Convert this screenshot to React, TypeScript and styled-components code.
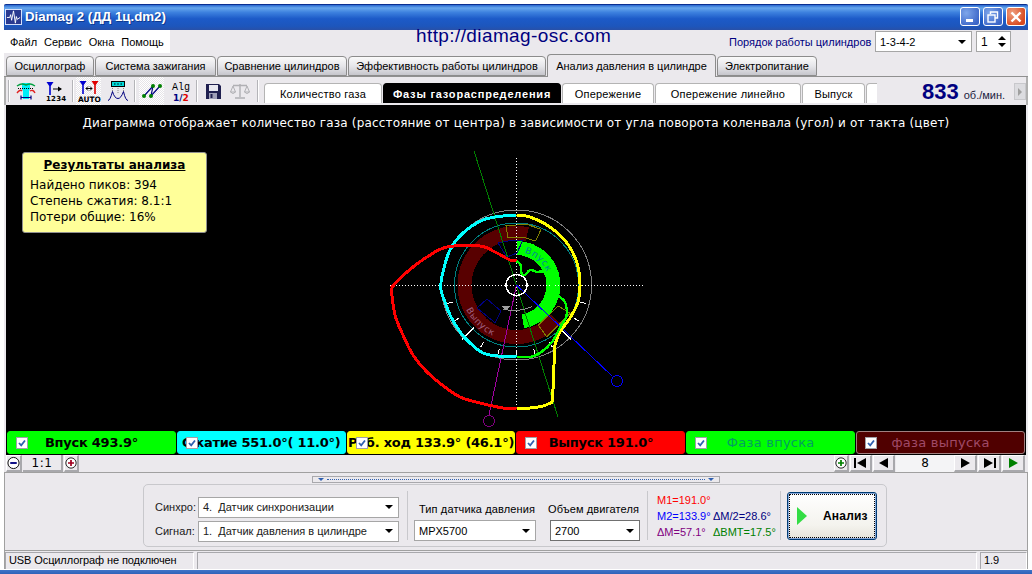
import React from "react";
import styled, { createGlobalStyle } from "styled-components";

const Global = createGlobalStyle`
  html, body { margin: 0; padding: 0; background: #fff; }
  body { font-family: "Liberation Sans", Arial, sans-serif; font-size: 11px; color: #000; }
`;

const Page = styled.div`
  width: 1032px;
  height: 574px;
  padding: 4px 4px 0;
  box-sizing: border-box;
  overflow: hidden;
`;

const Win = styled.div`
  height: 570px;
  display: flex;
  flex-direction: column;
  background: #ebe9ed;
`;

/* ---------- title bar ---------- */
const TitleBar = styled.div`
  height: 26px;
  flex: none;
  box-sizing: border-box;
  display: flex;
  align-items: center;
  gap: 3px;
  padding: 0 2px 2px 1px;
  border-top: 1px solid #0a2f90;
  border-radius: 2px 2px 0 0;
  background: linear-gradient(180deg, #2a68d0 0%, #66a6ec 12%, #3c80de 30%, #1c5ac8 55%, #1d56bc 85%, #2850a8 100%);
`;
const AppIcon = styled.svg`
  width: 17px;
  height: 16px;
  flex: none;
`;
const Caption = styled.div`
  flex: 1;
  color: #fff;
  font: bold 13.3px "Liberation Sans", Arial, sans-serif;
  text-shadow: 1px 1px 0 #0f3a90;
`;
const WinBtn = styled.div<{ $close?: boolean }>`
  width: 20px;
  height: 19px;
  box-sizing: border-box;
  border: 1px solid #fff;
  border-radius: 3px;
  display: flex;
  align-items: center;
  justify-content: center;
  background: ${(p) =>
    p.$close
      ? "radial-gradient(circle at 30% 30%, #f0a080, #d84a20 75%)"
      : "radial-gradient(circle at 30% 30%, #7ea6ea, #3c66c8 80%)"};
`;

/* ---------- menu row ---------- */
const MenuRow = styled.div`
  height: 24px;
  flex: none;
  display: flex;
  align-items: stretch;
`;
const Menu = styled.div`
  width: 166px;
  background: #fff;
  display: flex;
  align-items: center;
  gap: 7px;
  padding-left: 6px;
  box-sizing: border-box;
  font-size: 11px;
  height: 23px;
`;
const Url = styled.div`
  margin-left: 246px;
  width: 240px;
  font-size: 19px;
  letter-spacing: 0.4px;
  line-height: 20px;
  margin-top: -4px;
  color: #000080;
  position: relative;
`;
const OrderLabel = styled.div`
  margin-left: 73px;
  width: 146px;
  padding-top: 6px;
  color: #000080;
  font-size: 11px;
`;
const Combo = styled.div<{ $w: number; $h?: number; $dark?: boolean }>`
  width: ${(p) => p.$w}px;
  height: ${(p) => p.$h ?? 21}px;
  flex: none;
  box-sizing: border-box;
  background: #fff;
  border: 1px solid ${(p) => (p.$dark ? "#707070" : "#a6a6a6")};
  display: flex;
  align-items: center;
  justify-content: space-between;
  padding: 0 5px 0 4px;
  font-size: 11px;
  white-space: nowrap;
  overflow: hidden;
`;
const ComboArrow = styled.i`
  flex: none;
  width: 0;
  height: 0;
  border-left: 4px solid transparent;
  border-right: 4px solid transparent;
  border-top: 4px solid #000;
  margin-left: 4px;
`;
const OrderCombo = styled(Combo)`
  margin-top: 1px;
`;
const Spinner = styled(Combo)`
  margin: 1px 0 0 4px;
  padding: 0 4px;
  font-size: 12px;
`;
const SpinArrows = styled.div`
  display: flex;
  flex-direction: column;
  gap: 3px;
  i {
    display: block;
    width: 0;
    height: 0;
    border-left: 4px solid transparent;
    border-right: 4px solid transparent;
  }
  i:first-child { border-bottom: 4px solid #000; }
  i:last-child { border-top: 4px solid #000; }
`;

/* ---------- main tabs ---------- */
const TabStrip = styled.div`
  height: 23px;
  flex: none;
  box-sizing: border-box;
  display: flex;
  align-items: flex-end;
  padding-left: 2px;
  border-bottom: 1px solid #909090;
`;
const Tab = styled.div<{ $w: number; $active?: boolean }>`
  width: ${(p) => p.$w}px;
  height: ${(p) => (p.$active ? 23 : 20)}px;
  margin-right: 1px;
  margin-bottom: ${(p) => (p.$active ? -1 : 0)}px;
  box-sizing: border-box;
  border: 1px solid #8c8c8c;
  border-bottom: ${(p) => (p.$active ? "none" : "1px solid #8c8c8c")};
  border-radius: 4px 4px 0 0;
  display: flex;
  align-items: center;
  justify-content: center;
  white-space: nowrap;
  font-size: 11px;
  background: ${(p) => (p.$active ? "#ebe9ed" : "linear-gradient(180deg, #fafafa, #e6e6ea 50%, #c6c6cc)")};
  position: relative;
  z-index: ${(p) => (p.$active ? 1 : 0)};
`;

/* ---------- toolbar ---------- */
const Toolbar = styled.div`
  height: 28px;
  flex: none;
  display: flex;
  align-items: stretch;
  border-left: 2px solid #b0b0b0;
  border-right: 2px solid #b0b0b0;
  box-sizing: border-box;
`;
const Sep = styled.span<{ $ml?: number; $mr?: number }>`
  width: 1px;
  flex: none;
  align-self: center;
  height: 22px;
  margin: 0 ${(p) => p.$mr ?? 0}px 0 ${(p) => p.$ml ?? 0}px;
  background: #b4b4b8;
  border-right: 1px solid #fff;
`;
const ToolBtn = styled.div<{ $w: number; $pressed?: boolean }>`
  width: ${(p) => p.$w}px;
  flex: none;
  display: flex;
  align-items: center;
  justify-content: center;
  background: ${(p) =>
    p.$pressed ? "repeating-conic-gradient(#ffffff 0 25%, #e6e4e8 0 50%) 0 0 / 2px 2px" : "transparent"};
`;
const Ico = styled.svg`
  display: block;
  overflow: visible;
`;
const SubTabs = styled.div`
  display: flex;
  align-items: flex-end;
  width: 613px;
  margin-left: 5px;
  overflow: hidden;
  padding-bottom: 2px;
  flex: none;
`;
const SubTab = styled.div<{ $w: number; $active?: boolean }>`
  width: ${(p) => p.$w}px;
  height: 20px;
  flex: none;
  margin-right: 1px;
  box-sizing: border-box;
  border: 1px solid ${(p) => (p.$active ? "#000" : "#b4b4b4")};
  border-bottom: none;
  border-radius: 4px 4px 0 0;
  background: ${(p) => (p.$active ? "#000" : "#fff")};
  color: ${(p) => (p.$active ? "#fff" : "#000")};
  font-weight: ${(p) => (p.$active ? 700 : 400)};
  display: flex;
  align-items: center;
  justify-content: center;
  white-space: nowrap;
  font-size: 11px;
  letter-spacing: ${(p) => (p.$active ? 0.8 : 0.2)}px;
`;
const Rpm = styled.div`
  margin-left: 45px;
  display: flex;
  align-items: baseline;
  gap: 5px;
  color: #000080;
  padding-top: 2px;
  font-size: 11px;
  line-height: 24px;
  b {
    font: bold 22px "Liberation Sans", Arial, sans-serif;
  }
  span { color: #202040; }
`;
const ScrollBtn = styled.div`
  margin: 6px 0 5px auto;
  width: 12px;
  display: flex;
  align-items: center;
  justify-content: center;
  background: #dcdce0;
  border: 1px solid #c8c8cc;
  box-sizing: border-box;
  i {
    width: 0;
    height: 0;
    border-top: 4px solid transparent;
    border-bottom: 4px solid transparent;
    border-left: 4px solid #a0a0a0;
  }
`;

/* ---------- scope ---------- */
const Scope = styled.div`
  height: 350px;
  flex: none;
  margin: 0 2px;
  background: #000;
  display: flex;
  flex-direction: column;
`;
const Plot = styled.div`
  flex: 1;
  position: relative;
`;
const PlotCaption = styled.div`
  color: #fff;
  font: 12px "DejaVu Sans", Verdana, sans-serif;
  text-align: center;
  padding-top: 11px;
  line-height: 15px;
  position: relative;
  letter-spacing: 0.17px;
  white-space: nowrap;
`;
const PlotSvg = styled.svg`
  position: absolute;
  inset: 0;
  width: 100%;
  height: 100%;
`;
const Note = styled.div`
  position: absolute;
  left: 16px;
  top: 47px;
  width: 185px;
  height: 81px;
  box-sizing: border-box;
  background: #ffff99;
  border: 1px solid #909090;
  border-radius: 3px;
  padding: 4px 0 0 7px;
  font: 12px/16px "DejaVu Sans", Verdana, sans-serif;
  h4 {
    margin: 0 0 4px;
    padding-right: 7px;
    text-align: center;
    font-size: 12px;
    font-weight: 700;
    text-decoration: underline;
  }
`;
const Chips = styled.div`
  height: 24px;
  flex: none;
  display: flex;
  gap: 1px;
  padding: 0 1px;
`;
const Chip = styled.div<{ $bg: string; $fg: string; $bold?: boolean; $edge?: string }>`
  flex: 1 1 0;
  min-width: 0;
  position: relative;
  box-sizing: border-box;
  height: 23px;
  border-radius: 3px;
  border: 1px solid ${(p) => p.$edge ?? p.$bg};
  background: ${(p) => p.$bg};
  color: ${(p) => p.$fg};
  font: ${(p) => (p.$bold ? 700 : 400)} 13px "DejaVu Sans", Verdana, sans-serif;
  letter-spacing: ${(p) => (p.$bold ? -0.25 : 0.25)}px;
  display: flex;
  align-items: center;
  justify-content: center;
  white-space: nowrap;
  overflow: hidden;
`;
const Check = styled.span`
  position: absolute;
  left: 8px;
  top: 5px;
  width: 12px;
  height: 12px;
  box-sizing: border-box;
  background: #fff;
  border: 1px solid #a0a0a8;
  display: flex;
  align-items: center;
  justify-content: center;
`;

/* ---------- navigation row ---------- */
const NavRow = styled.div`
  height: 17px;
  flex: none;
  margin-left: 2px;
  margin-right: 2px;
  display: flex;
  align-items: stretch;
`;
const NavBtn = styled.div<{ $w: number }>`
  width: ${(p) => p.$w}px;
  flex: none;
  box-sizing: border-box;
  display: flex;
  align-items: center;
  justify-content: center;
  background: #ebe9ed;
  border-right: 2px solid #a8a8ac;
  border-bottom: 2px solid #a8a8ac;
  border-top: 1px solid #fff;
  border-left: 1px solid #fff;
  margin-right: 1px;
`;
const Ratio = styled.div`
  width: 40px;
  flex: none;
  box-sizing: border-box;
  text-align: center;
  font: 12px/17px "DejaVu Sans", Verdana, sans-serif;
  letter-spacing: 0.6px;
  border-bottom: 2px solid #a8a8ac;
  border-right: 2px solid #a8a8ac;
  margin-right: 1px;
`;
const Frame = styled.div`
  width: 58px;
  flex: none;
  text-align: center;
  background: #f4f4f6;
  font: 12px/17px "DejaVu Sans", Verdana, sans-serif;
`;
const NavGap = styled.div`
  flex: 1;
`;

/* ---------- lower panel ---------- */
const Lower = styled.div`
  flex: 1;
  display: flex;
  flex-direction: column;
  align-items: center;
  border-top: 1px solid #a0a0a0;
  border-left: 1px solid #a0a0a0;
  border-right: 1px solid #a0a0a0;
  min-height: 0;
`;
const Collapse = styled.div`
  width: 408px;
  height: 7px;
  margin-top: 3px;
  flex: none;
  box-sizing: border-box;
  border: 1px solid #a8a8ac;
  display: flex;
  align-items: center;
  justify-content: space-between;
  padding: 0 5px;
  i {
    width: 0;
    height: 0;
    border-left: 3px solid transparent;
    border-right: 3px solid transparent;
    border-top: 3px solid #3060b0;
  }
  span { flex: 1; margin: 0 3px; border-top: 1px dotted #3060b0; }
`;
const Panel = styled.div`
  width: 744px;
  height: 63px;
  margin-top: 1px;
  margin-left: -2px;
  flex: none;
  box-sizing: border-box;
  border: 1px solid #c8c8cc;
  border-radius: 5px;
  display: flex;
  align-items: center;
  padding: 0 9px 0 11px;
`;
const SourceCol = styled.div`
  display: grid;
  grid-template-columns: 43px 201px;
  row-gap: 3px;
  align-items: center;
  margin-top: 7px;
  color: #202020;
`;
const VLine = styled.div<{ $ml?: number }>`
  width: 1px;
  align-self: center;
  height: 49px;
  margin-left: ${(p) => p.$ml ?? 0}px;
  background: #c8c8cc;
  flex: none;
`;
const Field = styled.div<{ $ml: number; $inset: number }>`
  margin-left: ${(p) => p.$ml}px;
  flex: none;
  display: flex;
  flex-direction: column;
  gap: 5px;
  span { margin-left: ${(p) => p.$inset}px; letter-spacing: 0.12px; white-space: nowrap; }
  margin-top: 13px;
`;
const Readout = styled.div`
  margin-left: 9px;
  width: 123px;
  flex: none;
  display: grid;
  grid-template-columns: 56px auto;
  grid-auto-rows: 16px;
  align-items: center;
  font-size: 11px;
  white-space: nowrap;
`;
const Val = styled.span<{ $c: string }>`
  color: ${(p) => p.$c};
`;
const RunBtn = styled.div`
  margin-left: 6px;
  width: 90px;
  height: 48px;
  flex: none;
  box-sizing: border-box;
  border: 1px solid #003c74;
  border-radius: 3px;
  background: linear-gradient(180deg, #ffffff, #f4f3ee 70%, #e6e4da);
  box-shadow: inset 0 0 0 1px #88a8d8;
  outline: 1px dotted #000;
  outline-offset: -3px;
  display: flex;
  align-items: center;
  padding-left: 9px;
  gap: 16px;
  font-weight: 700;
  font-size: 12px;
  letter-spacing: 0.2px;
`;
const Play = styled.i`
  width: 0;
  height: 0;
  border-top: 9px solid transparent;
  border-bottom: 9px solid transparent;
  border-left: 10px solid #33dd44;
`;

/* ---------- status bar ---------- */
const Status = styled.div`
  height: 19px;
  flex: none;
  margin-top: 3px;
  width: 100%;
  box-sizing: border-box;
  border-top: 1px solid #a0a0a0;
  display: flex;
  gap: 3px;
  padding-top: 1px;
`;
const Cell = styled.div<{ $w?: number }>`
  ${(p) => (p.$w ? `width: ${p.$w}px; flex: none;` : "flex: 1;")}
  box-sizing: border-box;
  border-right: 1px solid #fff;
  border-left: 1px solid #a8a8ac;
  border-top: 1px solid #a8a8ac;
  line-height: 15px;
  padding-left: 3px;
  font-size: 11px;
  letter-spacing: -0.1px;
  white-space: nowrap;
`;
const BottomFrame = styled.div`
  height: 5px;
  flex: none;
  margin: 0 -4px;
  background: linear-gradient(180deg, #ffffff 0, #ffffff 20%, #3f74c8 20%, #2f62b8 100%);
`;

/* ---------- drawings ---------- */
const C = { x: 516.5, y: 285 };

const polar = (r: number, deg: number) => {
  const a = ((deg - 90) * Math.PI) / 180;
  return [C.x + r * Math.cos(a), C.y + r * Math.sin(a)];
};

const ringSector = (r0: number, r1: number, from: number, to: number) => {
  const [ax, ay] = polar(r1, from);
  const [bx, by] = polar(r1, to);
  const [cx, cy] = polar(r0, to);
  const [dx, dy] = polar(r0, from);
  const large = to - from > 180 ? 1 : 0;
  return `M${ax} ${ay}A${r1} ${r1} 0 ${large} 1 ${bx} ${by}L${cx} ${cy}A${r0} ${r0} 0 ${large} 0 ${dx} ${dy}Z`;
};

const arcPath = (r: number, from: number, to: number) => {
  const [ax, ay] = polar(r, from);
  const [bx, by] = polar(r, to);
  const sweep = to > from ? 1 : 0;
  return `M${ax} ${ay}A${r} ${r} 0 0 ${sweep} ${bx} ${by}`;
};

// catmull-rom through the measured points, curves are too angular otherwise
const smooth = (pts: number[][]) => {
  let d = `M${pts[0][0]} ${pts[0][1]}`;
  for (let i = 0; i < pts.length - 1; i++) {
    const p0 = pts[Math.max(i - 1, 0)];
    const p1 = pts[i];
    const p2 = pts[i + 1];
    const p3 = pts[Math.min(i + 2, pts.length - 1)];
    d += `C${p1[0] + (p2[0] - p0[0]) / 6} ${p1[1] + (p2[1] - p0[1]) / 6} ${p2[0] - (p3[0] - p1[0]) / 6} ${p2[1] - (p3[1] - p1[1]) / 6} ${p2[0]} ${p2[1]}`;
  }
  return d;
};

const ticks = [105, 120, 135, 150, 165, 180, 195, 210, 225, 240, 255];

const cyan = [[516.5,215],[503,216],[483,220],[463,233],[450,250],[442,276],[441,290],[445,302],[450,315],[460,332],[470,343],[483,353],[498,356],[516.5,357]];
const yellowTop = [[516.5,215],[530,217],[550,227],[567,243],[577,263],[580,284],[578,302],[570,318],[560,332],[555,345],[554,365],[552.5,402]];
const yellowEnd = [[552.5,402],[543,406],[530,408],[516.5,409]];
const redLow = [[516.5,409],[503,408],[480,403],[460,397],[442,385],[427,372],[413,355],[403,335],[395,315],[391,288]];
const redTop = [[391,288],[407,272],[427,257],[447,247],[480,246],[495,252],[510,260],[516.5,261]];
const greenIn = [[516.5,261],[520.5,265],[521.5,273],[525,275],[530,270],[537,272],[545,273],[558,295],[565,302],[566.5,316],[561.5,325],[552,342],[540,353],[530,357],[516.5,357]];

const Diagram = () => (
  <PlotSvg viewBox="6 105 1020 326" shapeRendering="crispEdges">
    <defs>
      <path id="inPath" d={arcPath(33, 14, 70)} />
      <path id="outPath" d={arcPath(56, 244, 195)} />
    </defs>
    <circle cx={C.x} cy={C.y} r={75} fill="none" stroke="#808080" strokeWidth={1} />
    <path d={ringSector(45, 59, 131, 372)} fill="#580000" />
    <path d={ringSector(30, 44, 1, 170)} fill="#00ff00" />
    <circle cx={C.x} cy={C.y} r={62} fill="none" stroke="#008080" strokeWidth={1} />
    <polygon points="506,225.7 526.7,224.3 541,229.3 535.7,241 523.3,237.3 508,237.7" fill="none" stroke="#808000" />
    <polygon points="538.3,325 558.3,306 570,313.3 546.7,336.7" fill="none" stroke="#808000" />
    <polygon points="498,243 510,240.5 523,240 517,253 507,257" fill="none" stroke="#000080" />
    <polygon points="477,308 487,299 501,311 495,322.7" fill="none" stroke="#000080" />
    <text fontFamily="DejaVu Sans, sans-serif" fontSize={9} fill="#0080a0" letterSpacing={0.6}>
      <textPath href="#inPath">Впуск</textPath>
    </text>
    <text fontFamily="DejaVu Sans, sans-serif" fontSize={9} fill="#a06080" letterSpacing={0.6}>
      <textPath href="#outPath">Выпуск</textPath>
    </text>
    <line x1={390} y1={285} x2={645} y2={285} stroke="#fff" strokeDasharray="1 2" />
    <line x1={516.5} y1={158} x2={516.5} y2={409} stroke="#fff" strokeDasharray="1 2" />
    {ticks.map((d) => {
      const long = d === 135 || d === 225;
      const [x1, y1] = polar(long ? 60 : 66, d);
      const [x2, y2] = polar(long ? 77 : 72, d);
      return <line key={d} x1={x1} y1={y1} x2={x2} y2={y2} stroke="#fff" />;
    })}
    <line x1={474} y1={151} x2={558} y2={417} stroke="#008000" />
    <line x1={516.5} y1={285} x2={489} y2={415} stroke="#a000a0" />
    <circle cx={489} cy={421} r={5.5} fill="none" stroke="#800080" />
    <line x1={516.5} y1={285} x2={612} y2={376} stroke="#0000ff" />
    <circle cx={617} cy={381} r={5.5} fill="none" stroke="#0000ff" />
    <path d={smooth(cyan)} fill="none" stroke="#00ffff" strokeWidth={3} />
    <path d={smooth(yellowTop)} fill="none" stroke="#ffff00" strokeWidth={3} />
    <path d={smooth(yellowEnd)} fill="none" stroke="#ffff00" strokeWidth={3} />
    <path d={smooth(redLow)} fill="none" stroke="#ff0000" strokeWidth={3} />
    <path d={smooth(redTop)} fill="none" stroke="#ff0000" strokeWidth={3} />
    <path d={smooth(greenIn)} fill="none" stroke="#00ff00" strokeWidth={2.4} />
    <circle cx={C.x} cy={C.y} r={10.5} fill="none" stroke="#fff" strokeWidth={1.4} />
    <path d="M503 309Q517 313 532 306.5" fill="none" stroke="#909090" />
    <polygon points="501,305.5 510,306 506,311" fill="#a0a0a0" />
  </PlotSvg>
);

const Tick = () => (
  <svg width="10" height="10" viewBox="0 0 10 10">
    <path d="M2 5l2.2 2.4L8 2.5" fill="none" stroke="#3060b0" strokeWidth="1.8" />
  </svg>
);

const Badge = ({ kind }: { kind: "minus" | "plusRed" | "plusGreen" }) => (
  <svg width="14" height="14" viewBox="0 0 14 14">
    <circle cx="7" cy="7" r="6" fill="#fff" stroke="#000" />
    {kind === "minus" ? (
      <rect x="3.5" y="6" width="7" height="2" fill="#000080" />
    ) : (
      <path
        d="M3.5 6h2.5v-2.5h2v2.5h2.5v2h-2.5v2.5h-2v-2.5h-2.5z"
        fill={kind === "plusRed" ? "#a00020" : "#008000"}
      />
    )}
  </svg>
);

const Step = ({ dir, bar, color = "#000" }: { dir: "l" | "r"; bar?: boolean; color?: string }) => (
  <svg width="16" height="10" viewBox="0 0 16 10">
    {dir === "l" ? (
      <>
        {bar && <rect x="1" y="0" width="2" height="10" fill={color} />}
        <path d={bar ? "M13 0v10L4 5z" : "M12 0v10L3 5z"} fill={color} />
      </>
    ) : (
      <>
        <path d={bar ? "M3 0v10l9-5z" : "M4 0v10l9-5z"} fill={color} />
        {bar && <rect x="13" y="0" width="2" height="10" fill={color} />}
      </>
    )}
  </svg>
);

const Pin = ({ x, c }: { x: number; c: string }) => (
  <path d={`M${x - 3.5} 0h7l-2.7 4v9h-1.6v-9z`} fill={c} />
);

const CurveIcon = () => (
  <Ico width="20" height="20" viewBox="0 0 20 20">
    <path d="M6 2h8v6l-1 2v8H7v-8l-1-2z" fill="#00f0f8" />
    <path d="M1 5q3-2 5-2t4 1q2-1 4-1t5 2" fill="none" stroke="#00a040" strokeWidth="1.4" />
    <path d="M2 7.5h16" stroke="#000" strokeDasharray="1 1" />
    <path d="M1 12q3-4 5-2M14 10q3-2 5 2" fill="none" stroke="#e02020" strokeWidth="1.4" />
    <path d="M5 16.5h10M5 14.5v4M15 14.5v4" stroke="#000080" strokeWidth="1.2" />
  </Ico>
);
const RulerIcon = () => (
  <Ico width="18" height="19" viewBox="0 0 18 19">
    <Pin x={4} c="#0000d0" />
    <path d="M7 7h8" stroke="#000" />
    <path d="M12 4.5l4 2.5-4 2.5z" fill="#000" />
    <text x="0" y="19" fontFamily="DejaVu Sans, sans-serif" fontSize="7" fontWeight="700" letterSpacing="0.2">1234</text>
  </Ico>
);
const AutoIcon = () => (
  <Ico width="22" height="21" viewBox="0 0 22 21">
    <Pin x={5} c="#0000d0" />
    <Pin x={17} c="#e00000" />
    <path d="M8 7.5h6M8 7.5l2-2M8 7.5l2 2M14 7.5l-2-2M14 7.5l-2 2" stroke="#000" fill="none" />
    <text x="0" y="20.5" fontFamily="DejaVu Sans, sans-serif" fontSize="7.4" fontWeight="700">AUTO</text>
  </Ico>
);
const PeaksIcon = () => (
  <Ico width="20" height="20" viewBox="0 0 20 20">
    <rect x="3.5" y="0.5" width="13" height="5" fill="#00d8d8" stroke="#000" />
    <path d="M6 3h1.5M9.25 3h1.5M12.5 3h1.5" stroke="#000" />
    <path d="M4.5 7v5M10 7v5M15.5 7v5" stroke="#888" strokeDasharray="1 1" />
    <path d="M0 19.5q2 0 4.5-9 2 7 5.5 7 3 0 5.5-7 2 9 4.5 9" fill="none" stroke="#000080" />
  </Ico>
);
const NodesIcon = () => (
  <Ico width="20" height="16" viewBox="0 0 20 16">
    <path d="M2 13l9-10-2 10 9-10" fill="none" stroke="#000080" strokeWidth="1.2" />
    <circle cx="2" cy="13" r="2" fill="#008000" />
    <circle cx="11" cy="3" r="2" fill="#008000" />
    <circle cx="9" cy="13" r="2" fill="#008000" />
    <circle cx="18" cy="3" r="2" fill="#008000" />
  </Ico>
);
const AlgIcon = () => (
  <Ico width="16" height="23" viewBox="0 0 16 23">
    <text x="0" y="10" fontFamily="Liberation Mono, monospace" fontSize="10">Alg</text>
    <text x="1" y="21" fontFamily="DejaVu Sans, sans-serif" fontSize="9" fontWeight="700" fill="#000080">1/<tspan fill="#e00000">2</tspan></text>
  </Ico>
);
const SaveIcon = () => (
  <Ico width="15" height="15" viewBox="0 0 15 15">
    <path d="M0 0h13l2 2v13H0z" fill="#202050" />
    <rect x="3" y="1" width="9" height="6" fill="#e8e8f0" />
    <rect x="3" y="9" width="8" height="6" fill="#a0a0b8" />
    <rect x="4.5" y="10" width="2" height="4" fill="#202050" />
  </Ico>
);
const ScaleIcon = () => (
  <Ico width="20" height="16" viewBox="0 0 20 16">
    <g fill="none" stroke="#b0b0b4">
      <path d="M10 1v13M5 15h10M3 2.5h14" strokeWidth="1.4" />
      <path d="M3 3L0.5 9h5zM17 3l-2.5 6h5z" />
      <path d="M0.5 9q2.5 3 5 0M14.5 9q2.5 3 5 0" fill="#d4d4d8" />
    </g>
  </Ico>
);

const chips = [
  { bg: "#00ff00", fg: "#000", label: "Впуск 493.9°", bold: true },
  { bg: "#00ffff", fg: "#000", label: "Сжатие 551.0°( 11.0°)", bold: true },
  { bg: "#ffff00", fg: "#000", label: "Раб. ход 133.9° (46.1°)", bold: true },
  { bg: "#ff0000", fg: "#000", label: "Выпуск 191.0°", bold: true },
  { bg: "#00ff00", fg: "#00a060", label: "Фаза впуска", bold: false },
  { bg: "#500000", fg: "#a04a68", label: "фаза выпуска", bold: false, edge: "#a08080" },
];

const mainTabs: [string, number, boolean?][] = [
  ["Осциллограф", 88],
  ["Система зажигания", 121],
  ["Сравнение цилиндров", 130],
  ["Эффективность работы цилиндров", 198],
  ["Анализ давления в цилиндре", 169, true],
  ["Электропитание", 100],
];

const subTabs: [string, number, boolean?][] = [
  ["Количество газа", 118],
  ["Фазы газораспределения", 178, true],
  ["Опережение", 92],
  ["Опережение линейно", 146],
  ["Выпуск", 63],
  ["", 20],
];

export default function App() {
  return (
    <Page>
      <Global />
      <Win>
        <TitleBar>
          <AppIcon viewBox="0 0 18 17">
            <rect x="0.5" y="0.5" width="17" height="16" fill="#2a3a90" stroke="#e0e8ff" />
            <path d="M2 9h3l1-3 1 6 2-10 2 13 1-7 1 3 3-2" fill="none" stroke="#fff" />
          </AppIcon>
          <Caption>Diamag 2 (ДД 1ц.dm2)</Caption>
          <WinBtn>
            <svg width="10" height="10" viewBox="0 0 10 10">
              <rect x="1" y="7" width="7" height="3" fill="#fff" />
            </svg>
          </WinBtn>
          <WinBtn>
            <svg width="12" height="12" viewBox="0 0 12 12" fill="none" stroke="#fff">
              <path d="M3.5 3V1h7v6H8" strokeWidth="1.4" />
              <rect x="1" y="4" width="7" height="7" strokeWidth="1.4" />
            </svg>
          </WinBtn>
          <WinBtn $close>
            <svg width="12" height="12" viewBox="0 0 12 12">
              <path d="M1.5 1.5l9 9M10.5 1.5l-9 9" stroke="#fff" strokeWidth="2.4" />
            </svg>
          </WinBtn>
        </TitleBar>

        <MenuRow>
          <Menu>
            <span>Файл</span>
            <span>Сервис</span>
            <span>Окна</span>
            <span>Помощь</span>
          </Menu>
          <Url>http://diamag-osc.com</Url>
          <OrderLabel>Порядок работы цилиндров</OrderLabel>
          <OrderCombo $w={97}>
            1-3-4-2
            <ComboArrow />
          </OrderCombo>
          <Spinner $w={35}>
            1
            <SpinArrows>
              <i />
              <i />
            </SpinArrows>
          </Spinner>
        </MenuRow>

        <TabStrip>
          {mainTabs.map(([label, w, active]) => (
            <Tab key={label} $w={w} $active={active}>
              {label}
            </Tab>
          ))}
        </TabStrip>

        <Toolbar>
          <Sep $ml={2} />
          <ToolBtn $w={31}><CurveIcon /></ToolBtn>
          <ToolBtn $w={27}><RulerIcon /></ToolBtn>
          <Sep $ml={4} $mr={2} />
          <ToolBtn $w={25} $pressed><AutoIcon /></ToolBtn>
          <ToolBtn $w={33}><PeaksIcon /></ToolBtn>
          <Sep $mr={3} />
          <ToolBtn $w={25} $pressed><NodesIcon /></ToolBtn>
          <ToolBtn $w={32}><AlgIcon /></ToolBtn>
          <Sep />
          <ToolBtn $w={31}><SaveIcon /></ToolBtn>
          <ToolBtn $w={22}><ScaleIcon /></ToolBtn>
          <Sep $ml={6} />
          <SubTabs>
            {subTabs.map(([label, w, active], i) => (
              <SubTab key={i} $w={w} $active={active}>
                {label}
              </SubTab>
            ))}
          </SubTabs>
          <Rpm>
            <b>833</b>
            <span>об./мин.</span>
          </Rpm>
          <ScrollBtn><i /></ScrollBtn>
        </Toolbar>

        <Scope>
          <Plot>
            <Diagram />
            <PlotCaption>
              Диаграмма отображает количество газа (расстояние от центра) в зависимости от угла поворота коленвала (угол) и от такта (цвет)
            </PlotCaption>
            <Note>
              <h4>Результаты анализа</h4>
              <div>Найдено пиков: 394</div>
              <div>Степень сжатия: 8.1:1</div>
              <div>Потери общие: 16%</div>
            </Note>
          </Plot>
          <Chips>
            {chips.map((c) => (
              <Chip key={c.label} $bg={c.bg} $fg={c.fg} $bold={c.bold} $edge={c.edge}>
                {c.label}
                <Check><Tick /></Check>
              </Chip>
            ))}
          </Chips>
        </Scope>

        <NavRow>
          <NavBtn $w={16}><Badge kind="minus" /></NavBtn>
          <Ratio>1:1</Ratio>
          <NavBtn $w={15}><Badge kind="plusRed" /></NavBtn>
          <NavGap />
          <NavBtn $w={15}><Badge kind="plusGreen" /></NavBtn>
          <NavBtn $w={22}><Step dir="l" bar /></NavBtn>
          <NavBtn $w={22}><Step dir="l" /></NavBtn>
          <Frame>8</Frame>
          <NavBtn $w={23}><Step dir="r" /></NavBtn>
          <NavBtn $w={23}><Step dir="r" bar /></NavBtn>
          <NavBtn $w={23}><Step dir="r" color="#008000" /></NavBtn>
        </NavRow>

        <Lower>
          <Collapse>
            <i />
            <span />
            <i />
          </Collapse>
          <Panel>
            <SourceCol>
              <span>Синхро:</span>
              <Combo $w={201} $h={21}>
                4.&nbsp; Датчик синхронизации
                <ComboArrow />
              </Combo>
              <span>Сигнал:</span>
              <Combo $w={201} $h={21}>
                1.&nbsp; Датчик давления в цилиндре
                <ComboArrow />
              </Combo>
            </SourceCol>
            <VLine $ml={8} />
            <Field $ml={6} $inset={5}>
              <span>Тип датчика давления</span>
              <Combo $w={122}>
                MPX5700
                <ComboArrow />
              </Combo>
            </Field>
            <Field $ml={14} $inset={-2}>
              <span>Объем двигателя</span>
              <Combo $w={90} $dark>
                2700
                <ComboArrow />
              </Combo>
            </Field>
            <VLine $ml={7} />
            <Readout>
              <Val $c="#ff0000">M1=191.0°</Val>
              <span />
              <Val $c="#0000ff">M2=133.9°</Val>
              <Val $c="#000080">ΔM/2=28.6°</Val>
              <Val $c="#800080">ΔM=57.1°</Val>
              <Val $c="#008000">ΔBMT=17.5°</Val>
            </Readout>
            <VLine />
            <RunBtn>
              <Play />
              Анализ
            </RunBtn>
          </Panel>
          <Status>
            <Cell $w={189}>USB Осциллограф не подключен</Cell>
            <Cell />
            <Cell $w={47}>1.9</Cell>
          </Status>
        </Lower>
        <BottomFrame />
      </Win>
    </Page>
  );
}
